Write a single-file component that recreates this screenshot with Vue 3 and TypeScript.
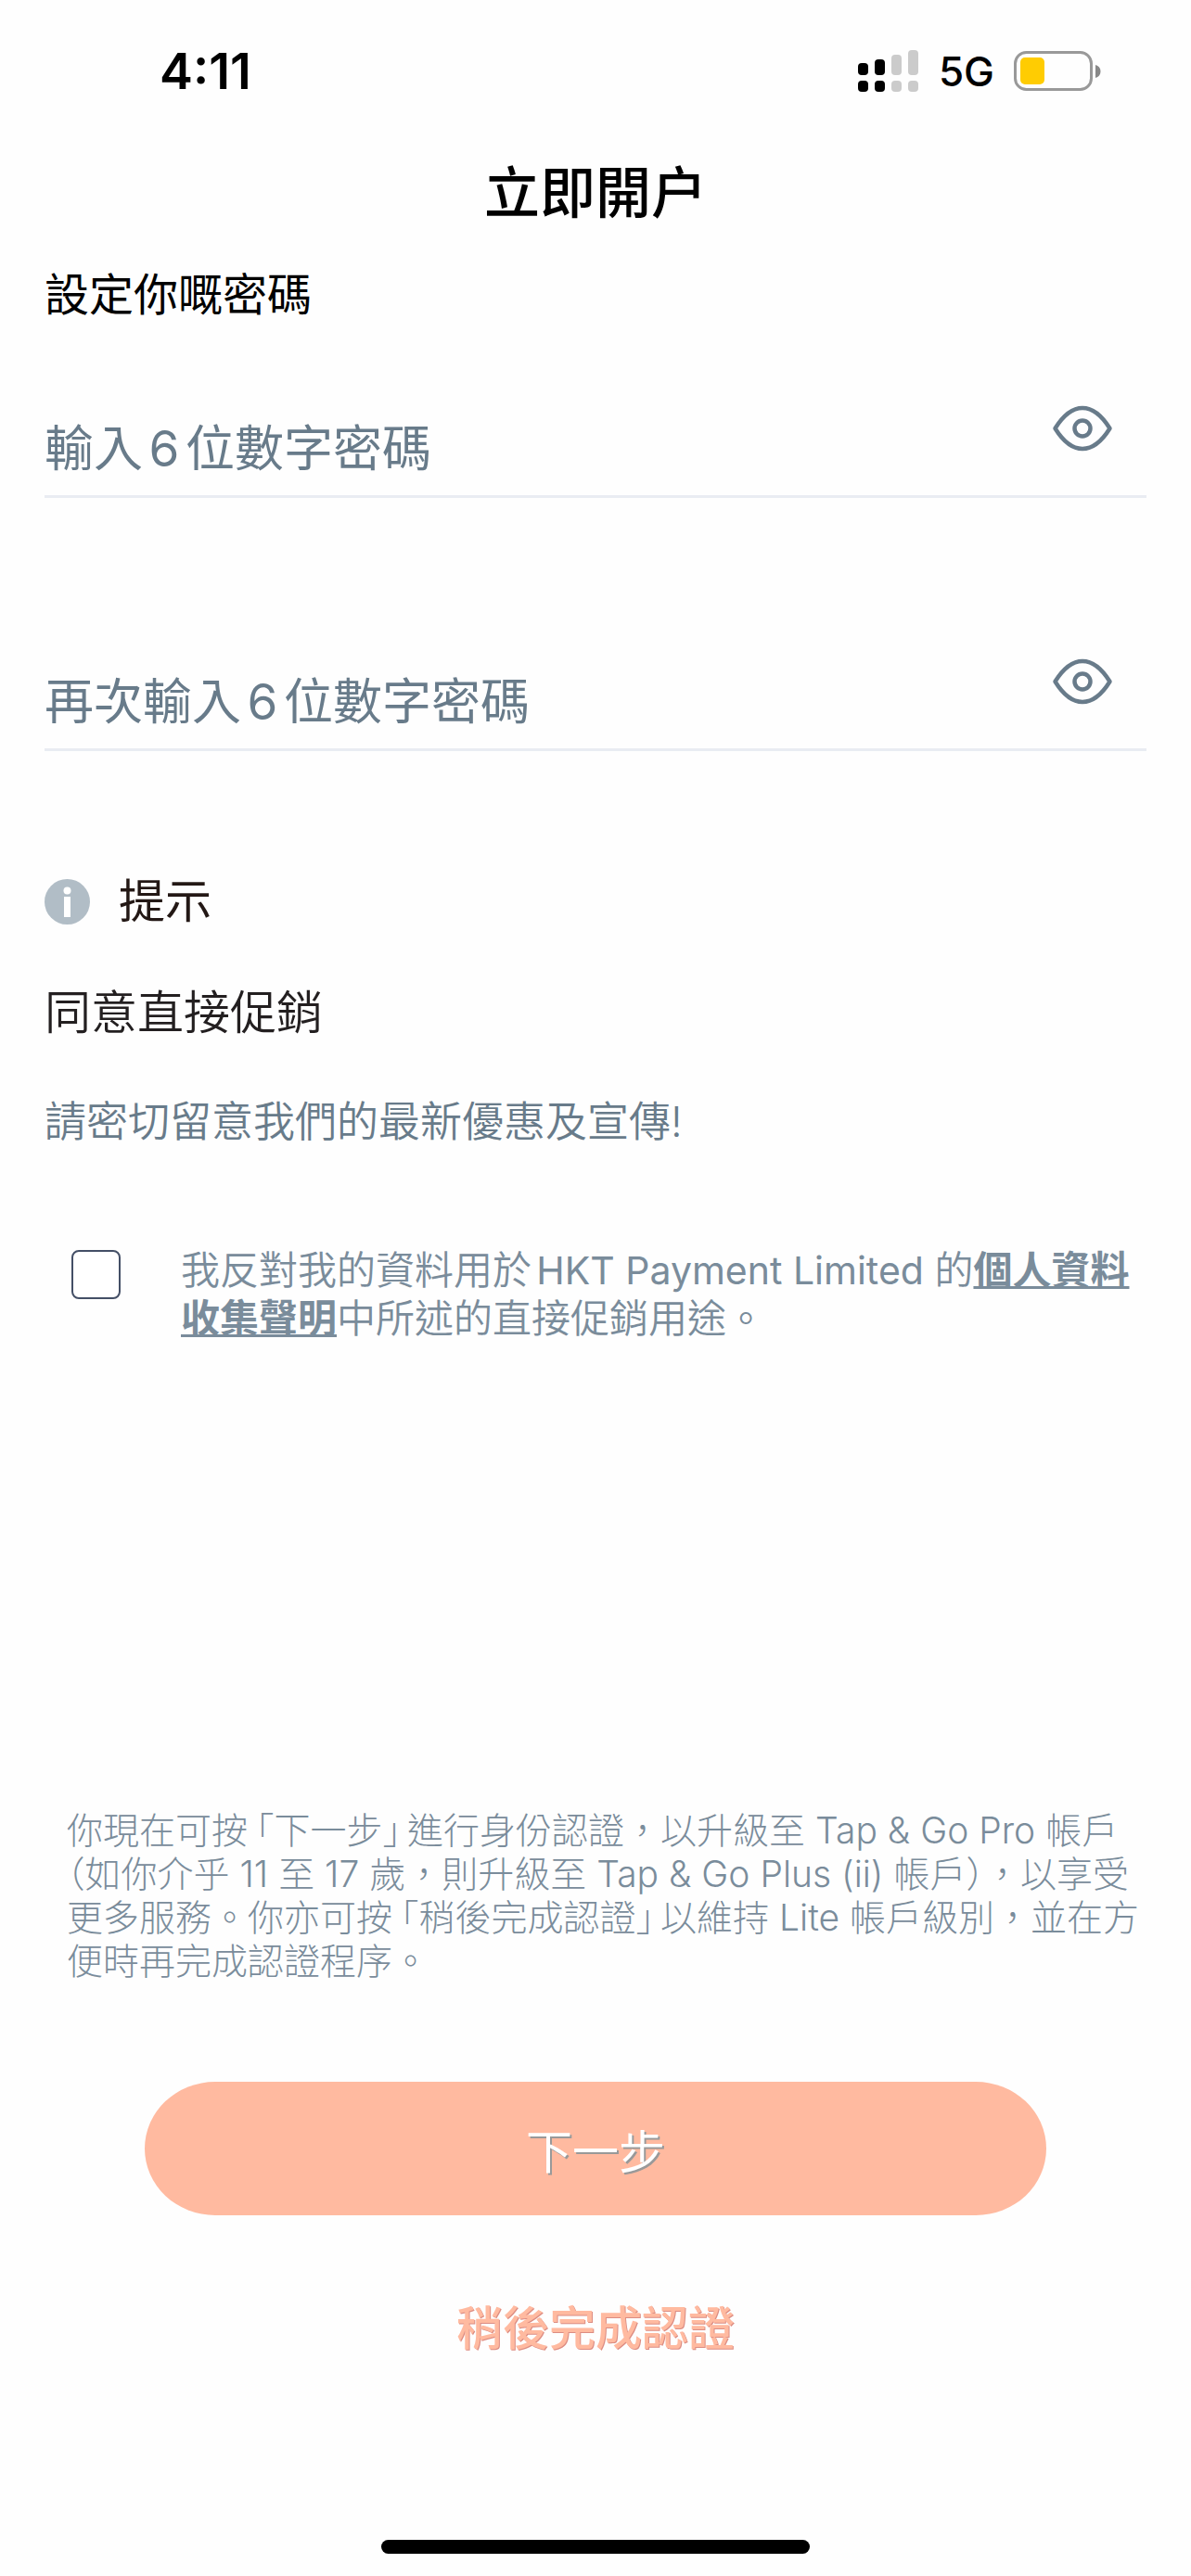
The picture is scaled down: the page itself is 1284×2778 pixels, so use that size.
<script setup lang="ts">
import { ref } from 'vue'

interface PinField {
  id: string
  placeholder: string
}

const fields: PinField[] = [
  { id: 'pin', placeholder: '輸入6位數字密碼' },
  { id: 'pin-confirm', placeholder: '再次輸入6位數字密碼' },
]

const values = ref<Record<string, string>>({ pin: '', 'pin-confirm': '' })
const visible = ref<Record<string, boolean>>({ pin: false, 'pin-confirm': false })
const optOut = ref(false)
</script>

<template>
  <div class="screen">
    <header class="status">
      <time class="clock">4:11</time>
      <div class="indicators">
        <svg class="signal" width="66" height="46" viewBox="0 0 66 46" aria-hidden="true">
          <g fill="#000">
            <rect x="0" y="14" width="11" height="13" rx="4" />
            <rect x="18" y="10" width="11" height="17" rx="4" />
            <rect x="0" y="33" width="11" height="12" rx="4" />
            <rect x="18" y="33" width="11" height="12" rx="4" />
          </g>
          <g fill="#cbcbcb">
            <rect x="36" y="5" width="11" height="22" rx="4" />
            <rect x="54" y="0" width="11" height="27" rx="4" />
            <rect x="36" y="33" width="11" height="12" rx="4" />
            <rect x="54" y="33" width="11" height="12" rx="4" />
          </g>
        </svg>
        <span class="network">5G</span>
        <svg class="battery" width="94" height="44" viewBox="0 0 94 44" aria-hidden="true">
          <rect x="1.5" y="1.5" width="82" height="40" rx="12" fill="none" stroke="#999" stroke-width="3" />
          <rect x="7" y="7" width="26" height="29" rx="5" fill="#ffcc02" />
          <path d="M88 15c3.500 1 5.500 3.500 5.500 7s-2 6-5.500 7z" fill="#888" />
        </svg>
      </div>
    </header>

    <main class="content">
      <h1 class="title">立即開户</h1>
      <form class="form" @submit.prevent>
        <h2 class="subtitle">設定你嘅密碼</h2>

        <div class="fields">
          <div v-for="field in fields" :key="field.id" class="field">
            <input
              :id="field.id"
              v-model="values[field.id]"
              class="field-input"
              :type="visible[field.id] ? 'text' : 'password'"
              :placeholder="field.placeholder"
              :aria-label="field.placeholder"
              inputmode="numeric"
              maxlength="6"
            />
            <button
              class="eye"
              type="button"
              aria-label="顯示密碼"
              @click="visible[field.id] = !visible[field.id]"
            >
              <svg width="66" height="50" viewBox="0 0 66 50" fill="none" stroke="#687b8a" stroke-width="4.500" stroke-linejoin="round" aria-hidden="true">
                <path d="M3.500 25C11 13 20 3 33 3s22 10 29.500 22C55 37 46 47 33 47S11 37 3.500 25z" />
                <circle cx="33" cy="25" r="8.500" />
              </svg>
            </button>
          </div>
        </div>

        <div class="tip">
          <svg width="49" height="49" viewBox="0 0 49 49" aria-hidden="true">
            <circle cx="24.500" cy="24.500" r="24.500" fill="#b1bdc6" />
            <circle cx="24.500" cy="12.500" r="4" fill="#fff" />
            <rect x="21" y="19" width="7" height="22" fill="#fff" />
          </svg>
          <span>提示</span>
        </div>

        <h3 class="promo-title">同意直接促銷</h3>
        <p class="promo-text">請密切留意我們的最新優惠及宣傳!</p>

        <div class="consent">
          <input id="opt-out" v-model="optOut" class="checkbox" type="checkbox" />
          <label class="consent-text" for="opt-out">我反對我的資料用於<span class="company">HKT Payment Limited </span>的<a href="#statement"><span>個人資料</span><span>收集聲明</span></a>中所述的直接促銷用途。</label>
        </div>

        <p class="note"><span>你現在可按</span><span class="open">「</span>下一步<span class="close">」</span><span>進行身份認證，以升級至 Tap &amp; Go Pro 帳戶</span><span class="paren">（</span><span>如你介乎 11 至 17 歲，則升級至 Tap &amp; Go Plus (ii) 帳戶</span><span class="paren">）</span><span>，以享受</span><span>更多服務。你亦可按</span><span class="open">「</span>稍後完成認證<span class="close">」</span><span>以維持 Lite 帳戶級別，並在方</span><span>便時再完成認證程序。</span></p>

        <button class="next" type="submit">下一步</button>
        <button class="later" type="button">稍後完成認證</button>
      </form>
    </main>

    <div class="home-indicator"></div>
  </div>
</template>

<style>
body {
  margin: 0;
  background: #fefefe;
}
</style>

<style scoped>
.screen {
  box-sizing: border-box;
  min-height: 100vh;
  display: flex;
  flex-direction: column;
  padding-bottom: 24px;
  background: #fefefe;
  color: #000;
  font-family: Inter, "Noto Sans CJK TC", sans-serif;
  text-autospace: normal;
}

.status {
  height: 154px;
  display: flex;
  align-items: center;
  justify-content: space-between;
  padding: 0 97px 0 172px;
}

.clock {
  font-size: 54px;
  font-weight: 600;
  line-height: 64px;
}

.indicators {
  display: flex;
  align-items: center;
  gap: 21px;
}

.network {
  font-size: 44px;
  font-weight: 500;
  line-height: 64px;
}

.content,
.form {
  flex: 1;
  display: flex;
  flex-direction: column;
}

.form {
  padding: 0 48px;
}

.title {
  margin: 0;
  font-size: 60px;
  font-weight: 500;
  line-height: 108px;
  text-align: center;
}

.subtitle {
  margin: 24px 0 0;
  font-size: 48px;
  font-weight: 400;
  line-height: 64px;
}

.fields {
  display: flex;
  flex-direction: column;
  gap: 150px;
  margin-top: 64px;
}

.field {
  display: flex;
  align-items: flex-end;
  border-bottom: 3px solid #e9ecf2;
}

.field-input {
  flex: 1;
  min-width: 0;
  height: 100px;
  padding: 0;
  border: 0;
  outline: 0;
  background: transparent;
  color: #000;
  font-family: inherit;
  font-size: 53px;
}

.field-input::placeholder {
  color: #687b8a;
  opacity: 1;
}

.eye {
  display: flex;
  align-items: center;
  justify-content: center;
  width: 100px;
  height: 96px;
  margin: 0 19px 24px 0;
  padding: 0;
  border: 0;
  background: transparent;
}

.tip {
  display: flex;
  align-items: center;
  gap: 31px;
  margin-top: 130px;
  color: #231815;
  font-size: 50px;
  line-height: 64px;
}

.promo-title {
  margin: 56px 0 0;
  color: #231f20;
  font-size: 50px;
  font-weight: 350;
  line-height: 64px;
}

.promo-text {
  margin: 54px 0 0;
  color: #687b8a;
  font-size: 45px;
  font-weight: 350;
  line-height: 64px;
}

.consent {
  display: flex;
  align-items: flex-start;
  gap: 65px;
  margin-top: 102px;
  padding-left: 29px;
}

.checkbox {
  flex: none;
  appearance: none;
  width: 53px;
  height: 53px;
  margin: 4px 0 0;
  border: 2px solid #444f66;
  border-radius: 8px;
  background: #fff;
}

.checkbox:checked {
  background: #687b8a;
}

.consent-text {
  color: #7a8c9b;
  font-size: 42px;
  font-weight: 350;
  line-height: 52px;
}

.company {
  font-size: 41px;
  font-weight: 400;
}

.consent-text a {
  color: inherit;
  font-weight: 700;
  text-decoration-thickness: 3px;
}

.note {
  margin: auto 0 0 24px;
  color: #7a8c9b;
  font-size: 39px;
  font-weight: 300;
  line-height: 47px;
}

.open,
.close,
.paren {
  font-feature-settings: "halt";
}

.open {
  margin-left: 9px;
}

.close {
  margin-right: 7px;
}

.next,
.later {
  padding: 0;
  border: 0;
  font-family: inherit;
  font-size: 50px;
}

.next {
  height: 144px;
  margin: 107px 108px 0;
  border-radius: 76px / 72px;
  background: #ffbaa0;
  color: #fff;
  text-shadow: 2px 2px 0 #999;
}

.later {
  align-self: center;
  margin: 90px 0 196px;
  background: transparent;
  color: #ffbaa0;
  font-weight: 500;
  line-height: 64px;
  text-shadow: 1px 1px 0 #dc8c82;
}

.home-indicator {
  align-self: center;
  width: 36%;
  height: 15px;
  border-radius: 8px;
  background: #000;
}
</style>
